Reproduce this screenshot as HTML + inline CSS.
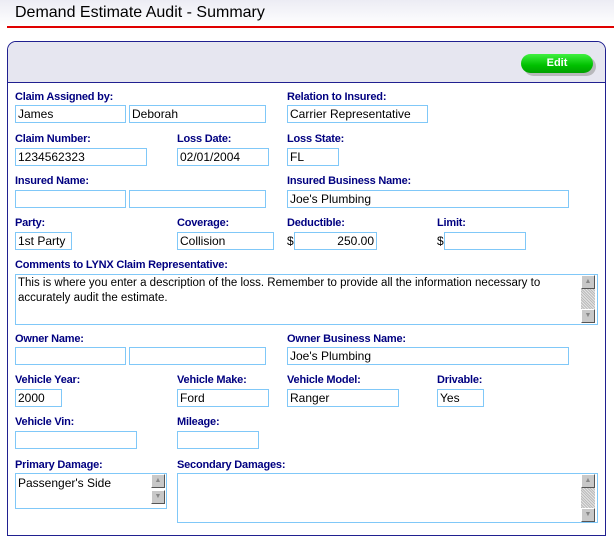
<!DOCTYPE html>
<html><head><style>
body{margin:0;width:614px;height:530px;overflow:hidden;background:#fff;font-family:"Liberation Sans",Arial,sans-serif;position:relative}
.a{position:absolute}
.t{left:15px;top:4px;font-size:16px;color:#000}
.l{position:absolute;font-size:11px;font-weight:bold;color:#000080;letter-spacing:-0.2px;white-space:nowrap}
.i{position:absolute;height:18px;border:1px solid #80c8f8;background:#fff;font-size:12px;line-height:16px;padding-left:2px;box-sizing:border-box;white-space:nowrap;overflow:hidden;color:#000}
.sb{position:absolute;width:14px;background:#c8c8c8;background-image:repeating-linear-gradient(45deg,#bbb 0 1px,#e4e4e4 1px 2px)}
.btn{position:absolute;width:14px;height:14px;background:#c8c8c8;border:1px solid;border-color:#fff #555 #555 #fff;box-sizing:border-box;font-size:7px;color:#888;text-align:center;line-height:12px}
</style></head><body>
<div class="a" style="left:0;top:0;width:614px;height:26px;background:linear-gradient(#ececf4,#fff)"></div>
<div class="a t">Demand Estimate Audit - Summary</div>
<div class="a" style="left:7px;top:26px;width:607px;height:2px;background:#e00000"></div>
<div class="a" style="left:7px;top:41px;width:599px;height:495px;border:1px solid #202090;border-radius:9px 9px 0 0;box-sizing:border-box"></div>
<div class="a" style="left:8px;top:42px;width:597px;height:40px;background:#e6e6f0;border-bottom:1px solid #202090;border-radius:8px 8px 0 0"></div>
<div class="a" style="left:524px;top:57px;width:72px;height:19px;border-radius:10px;background:#999;opacity:.6"></div>
<div class="a" style="left:521px;top:54px;width:72px;height:19px;border-radius:10px;background:linear-gradient(#40f040,#00c000 60%,#00a000);color:#fff;font-weight:bold;font-size:11px;text-align:center;line-height:19px">Edit</div>

<div class="l" style="left:15px;top:91px">Claim Assigned by:</div>
<div class="i" style="left:15px;top:105px;width:111px">James</div>
<div class="i" style="left:129px;top:105px;width:137px">Deborah</div>
<div class="l" style="left:287px;top:91px">Relation to Insured:</div>
<div class="i" style="left:287px;top:105px;width:141px">Carrier Representative</div>

<div class="l" style="left:15px;top:133px">Claim Number:</div>
<div class="i" style="left:15px;top:148px;width:132px">1234562323</div>
<div class="l" style="left:177px;top:133px">Loss Date:</div>
<div class="i" style="left:177px;top:148px;width:92px">02/01/2004</div>
<div class="l" style="left:287px;top:133px">Loss State:</div>
<div class="i" style="left:287px;top:148px;width:52px">FL</div>

<div class="l" style="left:15px;top:175px">Insured Name:</div>
<div class="i" style="left:15px;top:190px;width:111px"></div>
<div class="i" style="left:129px;top:190px;width:137px"></div>
<div class="l" style="left:287px;top:175px">Insured Business Name:</div>
<div class="i" style="left:287px;top:190px;width:282px">Joe's Plumbing</div>

<div class="l" style="left:15px;top:217px">Party:</div>
<div class="i" style="left:15px;top:232px;width:57px">1st Party</div>
<div class="l" style="left:177px;top:217px">Coverage:</div>
<div class="i" style="left:177px;top:232px;width:97px">Collision</div>
<div class="l" style="left:287px;top:217px">Deductible:</div>
<div class="a" style="left:287px;top:234px;font-size:12px">$</div>
<div class="i" style="left:294px;top:232px;width:83px;text-align:right;padding-right:2px;padding-left:0">250.00</div>
<div class="l" style="left:437px;top:217px">Limit:</div>
<div class="a" style="left:437px;top:234px;font-size:12px">$</div>
<div class="i" style="left:444px;top:232px;width:82px"></div>

<div class="l" style="left:15px;top:259px">Comments to LYNX Claim Representative:</div>
<div class="i" style="left:15px;top:274px;width:583px;height:51px;white-space:normal;font-size:11.5px;line-height:15px;padding:1px 20px 0 2px">This is where you enter a description of the loss. Remember to provide all the information necessary to accurately audit the estimate.</div>
<div class="sb" style="left:581px;top:275px;height:48px"></div>
<div class="btn" style="left:581px;top:275px">▲</div>
<div class="btn" style="left:581px;top:309px">▼</div>

<div class="l" style="left:15px;top:333px">Owner Name:</div>
<div class="i" style="left:15px;top:347px;width:111px"></div>
<div class="i" style="left:129px;top:347px;width:137px"></div>
<div class="l" style="left:287px;top:333px">Owner Business Name:</div>
<div class="i" style="left:287px;top:347px;width:282px">Joe's Plumbing</div>

<div class="l" style="left:15px;top:374px">Vehicle Year:</div>
<div class="i" style="left:15px;top:389px;width:47px">2000</div>
<div class="l" style="left:177px;top:374px">Vehicle Make:</div>
<div class="i" style="left:177px;top:389px;width:92px">Ford</div>
<div class="l" style="left:287px;top:374px">Vehicle Model:</div>
<div class="i" style="left:287px;top:389px;width:112px">Ranger</div>
<div class="l" style="left:437px;top:374px">Drivable:</div>
<div class="i" style="left:437px;top:389px;width:47px">Yes</div>

<div class="l" style="left:15px;top:416px">Vehicle Vin:</div>
<div class="i" style="left:15px;top:431px;width:122px"></div>
<div class="l" style="left:177px;top:416px">Mileage:</div>
<div class="i" style="left:177px;top:431px;width:82px"></div>

<div class="l" style="left:15px;top:459px">Primary Damage:</div>
<div class="i" style="left:15px;top:473px;width:152px;height:36px;line-height:18px">Passenger's Side</div>
<div class="btn" style="left:151px;top:474px">▲</div>
<div class="btn" style="left:151px;top:490px">▼</div>
<div class="l" style="left:177px;top:459px">Secondary Damages:</div>
<div class="i" style="left:177px;top:473px;width:421px;height:50px"></div>
<div class="sb" style="left:581px;top:474px;height:48px"></div>
<div class="btn" style="left:581px;top:474px">▲</div>
<div class="btn" style="left:581px;top:508px">▼</div>
</body></html>
